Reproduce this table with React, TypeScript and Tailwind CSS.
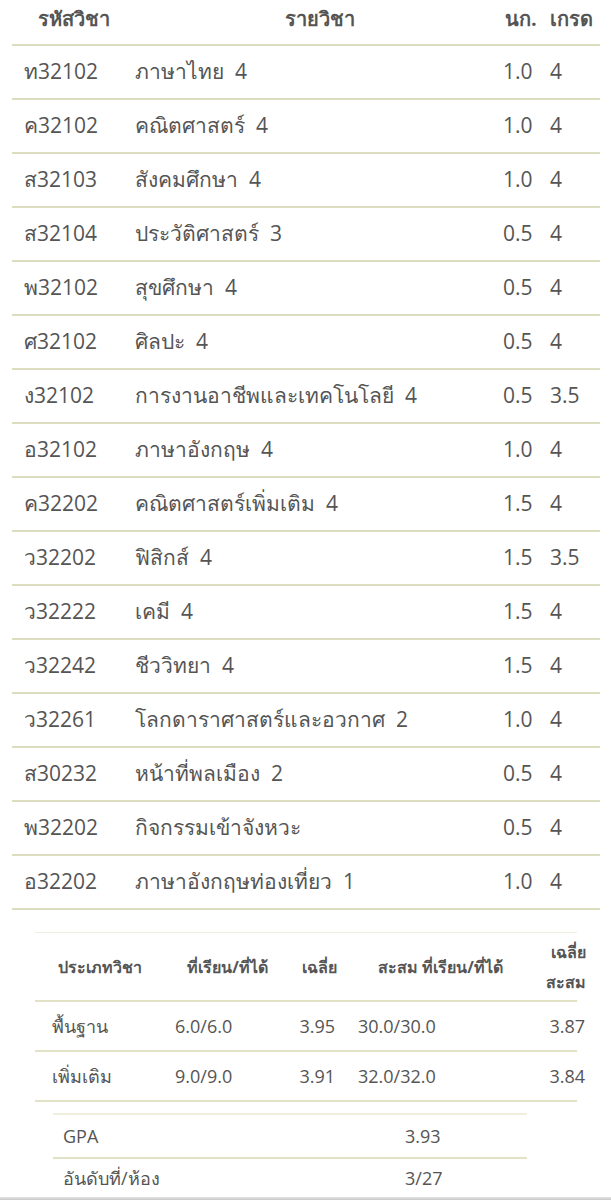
import React from 'react'

type Course = { code: string; name: string; credit: string; grade: string }

const COURSES: Course[] = [
  { code: 'ท32102', name: 'ภาษาไทย  4', credit: '1.0', grade: '4' },
  { code: 'ค32102', name: 'คณิตศาสตร์  4', credit: '1.0', grade: '4' },
  { code: 'ส32103', name: 'สังคมศึกษา  4', credit: '1.0', grade: '4' },
  { code: 'ส32104', name: 'ประวัติศาสตร์  3', credit: '0.5', grade: '4' },
  { code: 'พ32102', name: 'สุขศึกษา  4', credit: '0.5', grade: '4' },
  { code: 'ศ32102', name: 'ศิลปะ  4', credit: '0.5', grade: '4' },
  { code: 'ง32102', name: 'การงานอาชีพและเทคโนโลยี  4', credit: '0.5', grade: '3.5' },
  { code: 'อ32102', name: 'ภาษาอังกฤษ  4', credit: '1.0', grade: '4' },
  { code: 'ค32202', name: 'คณิตศาสตร์เพิ่มเติม  4', credit: '1.5', grade: '4' },
  { code: 'ว32202', name: 'ฟิสิกส์  4', credit: '1.5', grade: '3.5' },
  { code: 'ว32222', name: 'เคมี  4', credit: '1.5', grade: '4' },
  { code: 'ว32242', name: 'ชีววิทยา  4', credit: '1.5', grade: '4' },
  { code: 'ว32261', name: 'โลกดาราศาสตร์และอวกาศ  2', credit: '1.0', grade: '4' },
  { code: 'ส30232', name: 'หน้าที่พลเมือง  2', credit: '0.5', grade: '4' },
  { code: 'พ32202', name: 'กิจกรรมเข้าจังหวะ', credit: '0.5', grade: '4' },
  { code: 'อ32202', name: 'ภาษาอังกฤษท่องเที่ยว  1', credit: '1.0', grade: '4' },
]

const SUMMARY = [
  { type: 'พื้นฐาน', term: '6.0/6.0', avg: '3.95', total: '30.0/30.0', totalAvg: '3.87' },
  { type: 'เพิ่มเติม', term: '9.0/9.0', avg: '3.91', total: '32.0/32.0', totalAvg: '3.84' },
]

const mainCols = 'grid grid-cols-[123px_370px_45px_50px]'
const sumCols = 'grid grid-cols-[130px_125px_55px_185px_47px]'

export default function App() {
  return (
    <main
      className="w-[611px] h-[1200px] bg-white text-[#555] overflow-hidden flex flex-col"
      style={{ fontFamily: '"Open Sans", "Noto Sans", sans-serif' }}
    >
      {/* Courses */}
      <div className="mx-[12px] w-[588px]">
        <div className={`${mainCols} h-[46px] border-b-2 border-[#dcdcbe] items-center pb-[6px] text-[20px] font-bold`}>
          <span className="text-center">รหัสวิชา</span>
          <span className="text-center">รายวิชา</span>
          <span className="whitespace-nowrap">นก.</span>
          <span className="whitespace-nowrap">เกรด</span>
        </div>
        {COURSES.map((c) => (
          <div
            key={c.code}
            className={`${mainCols} h-[54px] border-b-2 border-[#dcdcbe] items-center text-[21px] whitespace-pre`}
          >
            <span className="pl-[12px]">{c.code}</span>
            <span>{c.name}</span>
            <span className="-ml-[2px]">{c.credit}</span>
            <span>{c.grade}</span>
          </div>
        ))}
      </div>

      {/* Summary */}
      <div className="mt-[22px] ml-[35px] w-[542px] border-t border-[#f0eedc]">
        <div className={`${sumCols} h-[69px] border-b-2 border-[#e2e2c6] items-center text-[16px] font-bold`}>
          <span className="text-center">ประเภทวิชา</span>
          <span className="text-center">ที่เรียน/ที่ได้</span>
          <span className="text-right pr-[8px]">เฉลี่ย</span>
          <span className="pl-[33px] whitespace-nowrap">สะสม  ที่เรียน/ที่ได้</span>
          <span className="text-right -mr-[9px] leading-[30px]">
            เฉลี่ย
            <br />
            สะสม
          </span>
        </div>
        {SUMMARY.map((s) => (
          <div
            key={s.type}
            className={`${sumCols} h-[50px] border-b-2 border-[#e2e2c6] items-center text-[18px]`}
          >
            <span className="pl-[17px]">{s.type}</span>
            <span className="pl-[10px]">{s.term}</span>
            <span className="text-right pr-[10px]">{s.avg}</span>
            <span className="pl-[13px]">{s.total}</span>
            <span className="text-right -mr-[8px]">{s.totalAvg}</span>
          </div>
        ))}
      </div>

      {/* GPA */}
      <div className="mt-[11px] ml-[53px] w-[474px] border-t-2 border-[#f0eedc] text-[18px]">
        <div className="grid grid-cols-[340px_134px] h-[44px] items-center border-b-2 border-[#e2e2c6]">
          <span className="pl-[10px]">GPA</span>
          <span className="pl-[12px]">3.93</span>
        </div>
        <div className="grid grid-cols-[340px_134px] h-[38px] items-center">
          <span className="pl-[10px]">อันดับที่/ห้อง</span>
          <span className="pl-[12px]">3/27</span>
        </div>
      </div>

      <div className="mt-auto h-[4px] bg-gradient-to-b from-[#e4e4e4] to-[#c8c8c8]" />
    </main>
  )
}
